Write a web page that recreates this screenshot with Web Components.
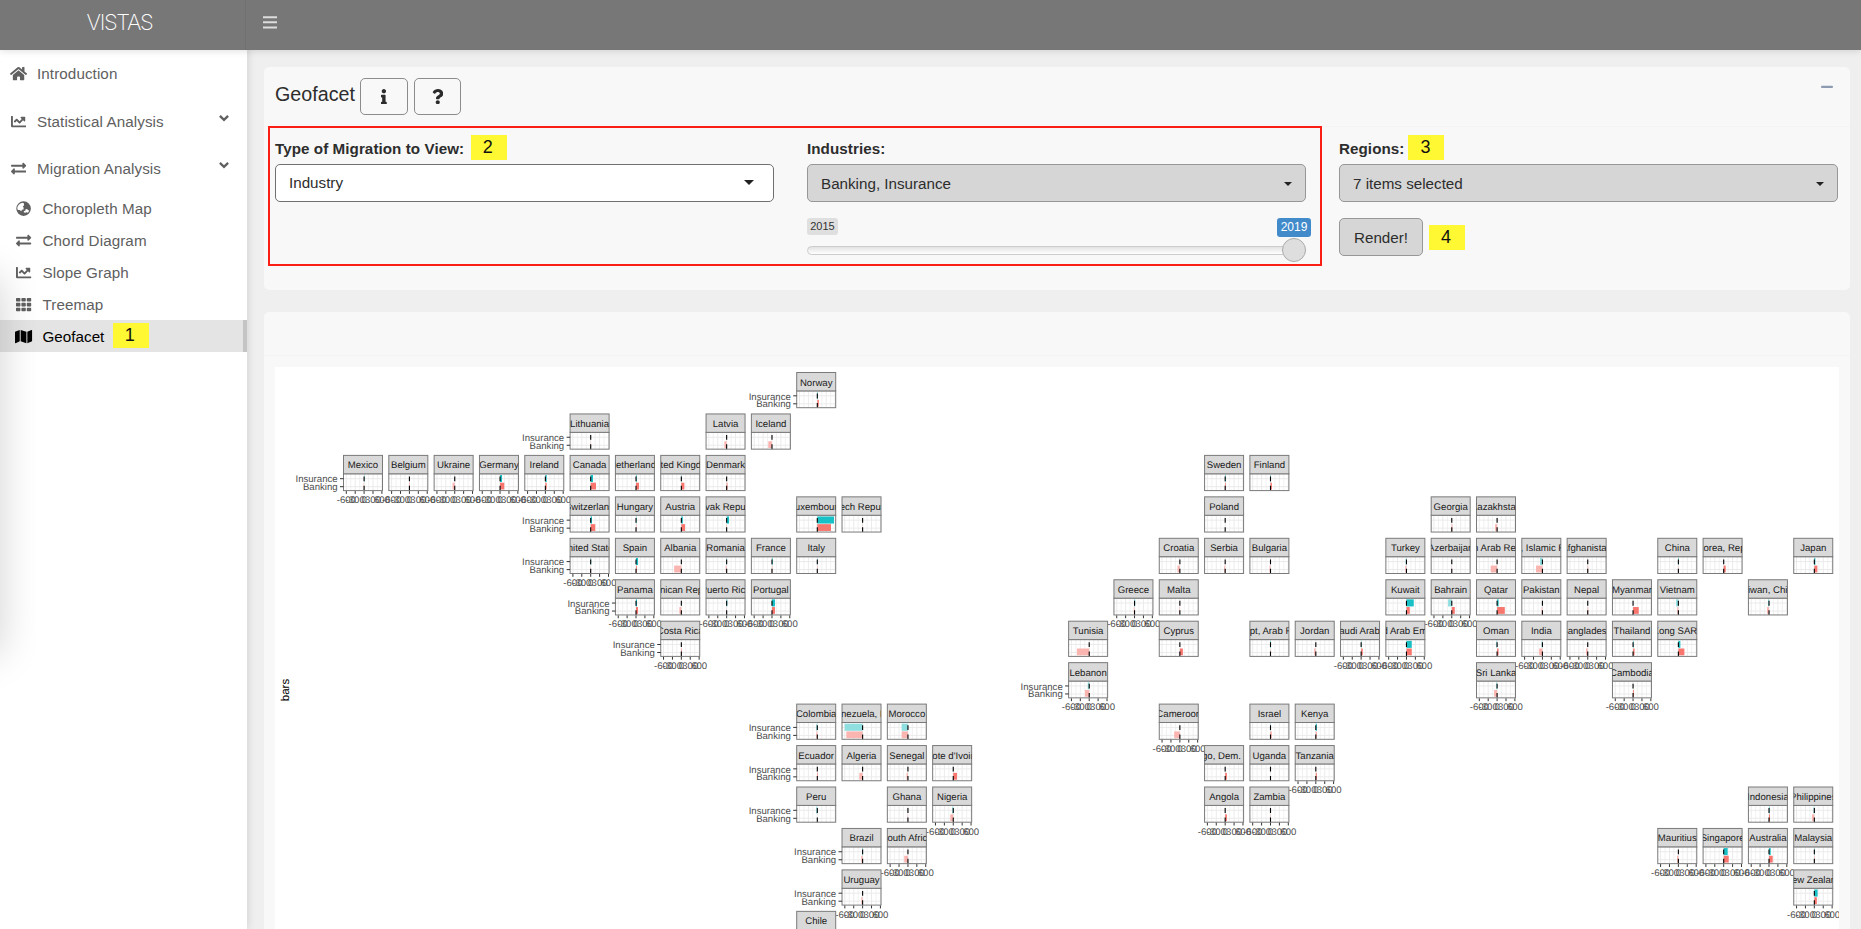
<!DOCTYPE html>
<html lang="en">
<head>
<meta charset="utf-8">
<title>VISTAS</title>
<style>
html,body{margin:0;height:100%;overflow:hidden}
body{font:15.2px/20px "Liberation Sans",Arial,sans-serif;color:#2d2d2d;background:#efefef}
</style>
</head>
<body>
<vistas-app></vistas-app>
<script>
const define = (name, html, setup) => customElements.define(name, class extends HTMLElement {
  connectedCallback() {
    if (this.shadowRoot) return;
    const root = this.attachShadow({ mode: 'open' });
    root.innerHTML = typeof html === 'function' ? html(this) : html;
    if (setup) setup(this, root);
  }
});

const ICONS = {
  home: ['0 0 576 512', '<path d="M280.37 148.26L96 300.11V464a16 16 0 0 0 16 16l112.06-.29a16 16 0 0 0 15.92-16V368a16 16 0 0 1 16-16h64a16 16 0 0 1 16 16v95.64a16 16 0 0 0 16 16.05L464 480a16 16 0 0 0 16-16V300L295.67 148.26a12.19 12.19 0 0 0-15.3 0zM571.6 251.47L488 182.56V44.05a12 12 0 0 0-12-12h-56a12 12 0 0 0-12 12v72.61L318.47 43a48 48 0 0 0-61 0L4.34 251.47a12 12 0 0 0-1.6 16.9l25.5 31A12 12 0 0 0 45.15 301l235.22-193.74a12.19 12.19 0 0 1 15.3 0L530.9 301a12 12 0 0 0 16.9-1.6l25.5-31a12 12 0 0 0-1.7-16.93z"/>'],
  chart: ['0 0 512 512', '<path d="M496 384H64V80c0-8.84-7.16-16-16-16H16C7.16 64 0 71.16 0 80v336c0 17.67 14.33 32 32 32h464c8.84 0 16-7.16 16-16v-32c0-8.84-7.16-16-16-16zM464 96H345.94c-21.38 0-32.09 25.85-16.97 40.97l32.4 32.4L288 242.75l-73.37-73.37c-12.5-12.5-32.76-12.5-45.25 0l-68.69 68.69c-6.25 6.25-6.25 16.38 0 22.63l22.62 22.62c6.25 6.25 16.38 6.25 22.63 0L192 237.25l73.37 73.37c12.5 12.5 32.76 12.5 45.25 0l96-96 32.4 32.4c15.12 15.12 40.97 4.41 40.97-16.97V112c.01-8.84-7.15-16-15.99-16z"/>'],
  exchange: ['0 0 512 512', '<path d="M0 168v-16c0-13.255 10.745-24 24-24h360V80c0-21.367 25.899-32.042 40.971-16.971l80 80c9.372 9.373 9.372 24.569 0 33.941l-80 80C409.956 271.982 384 261.456 384 240v-48H24c-13.255 0-24-10.745-24-24zm488 152H128v-48c0-21.314-25.862-32.08-40.971-16.971l-80 80c-9.372 9.373-9.372 24.569 0 33.941l80 80C102.057 463.997 128 453.437 128 432v-48h360c13.255 0 24-10.745 24-24v-16c0-13.255-10.745-24-24-24z"/>'],
  globe: ['0 0 16 16', '<path fill-rule="evenodd" d="M8 .3a7.7 7.7 0 1 0 0 15.4A7.7 7.7 0 0 0 8 .3zM6.600 1.900l1.700.6.2 1.900-1.300 1.500.9 1.300-.2 1.700-1.600.3-.8 1.500-1.600-1.300-2 .1-.6-2.200C1.700 5 3.600 2.600 6.600 1.900zM9.800 9l1.700-.5 1.200 1 1.200.9-1.300 2-1.500-.5-1.500.4-1.500-.5.3-1.200 1.500-.3z"/>'],
  grid: ['0 0 512 512', '<path d="M24 32h102q23 0 23 24v72q0 24-23 24H24Q0 152 0 128V56Q0 32 24 32zM206 32h100q24 0 24 24v72q0 24-24 24H206q-24 0-24-24V56q0-24 24-24zM387 32h101q24 0 24 24v72q0 24-24 24H387q-24 0-24-24V56q0-24 24-24zM24 192h102q23 0 23 24v80q0 24-23 24H24Q0 320 0 296v-80q0-24 24-24zM206 192h100q24 0 24 24v80q0 24-24 24H206q-24 0-24-24v-80q0-24 24-24zM387 192h101q24 0 24 24v80q0 24-24 24H387q-24 0-24-24v-80q0-24 24-24zM24 360h102q23 0 23 24v72q0 24-23 24H24Q0 480 0 456v-72q0-24 24-24zM206 360h100q24 0 24 24v72q0 24-24 24H206q-24 0-24-24v-72q0-24 24-24zM387 360h101q24 0 24 24v72q0 24-24 24H387q-24 0-24-24v-72q0-24 24-24z"/>'],
  map: ['0 0 576 512', '<path d="M0 117.66v346.32c0 11.32 11.43 19.06 21.94 14.86L160 416V32L20.12 87.95A32.006 32.006 0 0 0 0 117.66zM192 416l192 64V96L192 32v384zM554.06 33.16L416 96v384l139.88-55.95A31.996 31.996 0 0 0 576 394.34V48.02c0-11.32-11.43-19.06-21.94-14.86z"/>'],
  info: ['0 0 192 512', '<path d="M20 424.229h20V279.771H20c-11.046 0-20-8.954-20-20V212c0-11.046 8.954-20 20-20h112c11.046 0 20 8.954 20 20v212.229h20c11.046 0 20 8.954 20 20V492c0 11.046-8.954 20-20 20H20c-11.046 0-20-8.954-20-20v-47.771c0-11.046 8.954-20 20-20zM96 0C56.235 0 24 32.235 24 72s32.235 72 72 72 72-32.235 72-72S135.764 0 96 0z"/>'],
  question: ['0 0 384 512', '<path d="M202.021 0C122.202 0 70.503 32.703 29.914 91.026c-7.363 10.58-5.093 25.086 5.178 32.874l43.138 32.709c10.373 7.865 25.132 6.026 33.253-4.148 25.049-31.381 43.63-49.449 82.757-49.449 30.764 0 68.816 19.799 68.816 49.631 0 22.552-18.617 34.134-48.993 51.164-35.423 19.86-82.299 44.576-82.299 106.405V320c0 13.255 10.745 24 24 24h72.471c13.255 0 24-10.745 24-24v-5.773c0-42.86 125.268-44.645 125.268-160.627C377.504 66.256 286.902 0 202.021 0zM192 373.459c-38.196 0-69.271 31.075-69.271 69.271 0 38.195 31.075 69.27 69.271 69.27s69.271-31.075 69.271-69.271-31.075-69.27-69.271-69.27z"/>'],
  chevron: ['0 0 10 12', '<path d="M.9 3.900L5 7.900l4.100-4" fill="none" stroke="currentColor" stroke-width="2.300"/>'],
  bars: ['0 0 14 13', '<path d="M0 .2h14v2H0zM0 5.300h14v2H0zM0 10.400h14v2H0z"/>'],
  minus: ['0 0 12 4', '<rect y=".7" width="12" height="2.400" rx="1"/>']
};
define('ui-icon', el => {
  const [box, body] = ICONS[el.getAttribute('name')];
  return `<style>:host{display:inline-flex;flex:none}svg{height:var(--icon-h,15.2px);fill:currentColor;display:block}</style><svg viewBox="${box}">${body}</svg>`;
});

define('step-mark', `<style>:host{display:flex;flex:none;justify-content:center;box-sizing:border-box;width:36px;height:25px;background:#fff833;color:#111;font-weight:400;font-size:18px;line-height:24px;padding-right:2px;letter-spacing:0}</style><slot></slot>`);

define('app-header', `<style>
:host{display:flex;height:50px;flex:none;background:#777;color:#ddd;position:relative;z-index:2;box-shadow:0 1px 7px rgba(0,0,0,.13)}
.brand{width:246px;border-right:1px solid #707070;box-sizing:border-box;height:50px;text-align:center;font:200 22px/44px Inter,Roboto,sans-serif;letter-spacing:-1.3px;color:#fff;padding-right:6px}
.tool{display:flex;padding:16px 0 0 17px;--icon-h:13px}
</style><div class="brand"><slot></slot></div><div class="tool"><ui-icon name="bars"></ui-icon></div>`);

define('nav-item', el => `<style>
:host{display:flex;align-items:center;box-sizing:border-box;height:47px;color:#606060;padding-left:9px;letter-spacing:.09px}
:host([group]){height:47.500px;padding-top:1px}
:host([group][icon=chart]){padding-top:2px}
:host([sub]){height:32px;padding:1.500px 0 0 14.500px}
:host([active]){background:#e4e4e4;color:#000;border-right:4px solid #c4c4c4;letter-spacing:.03px}
.ic{width:19px;display:flex;justify-content:center;margin-right:9px}
:host([sub]) .ic{margin-right:9px}
.chev{margin:-8px 18px 0 auto;--icon-h:12px}
::slotted(step-mark){margin:-2px 0 0 8.500px}
</style><span class="ic"><ui-icon name="${el.getAttribute('icon')}"></ui-icon></span><slot></slot>${el.hasAttribute('group') ? '<ui-icon class="chev" name="chevron"></ui-icon>' : ''}`);

define('side-nav', `<style>
:host{display:block;width:247px;flex:none;background:#fff;padding-top:50px;margin-top:-50px;box-sizing:border-box;height:929px;position:relative;z-index:1;box-shadow:1px 0 8px rgba(0,0,0,.12)}
nav{display:flex;flex-direction:column}
.edge{position:absolute;left:0;top:200px;width:36px;height:540px;overflow:hidden;pointer-events:none}
.edge:before{content:"";position:absolute;left:-60px;top:82px;width:56px;height:368px;box-shadow:0 0 40px 4px rgba(0,0,0,.18)}
</style><nav><slot></slot></nav><div class="edge"></div>`);

define('dash-card', `<style>
:host{display:block;background:#f8f8f8;border-radius:5px;box-sizing:border-box}
.head{display:flex;align-items:flex-start;box-sizing:border-box;height:var(--head-h,60px);padding:0 17px 0 11px;border-bottom:1px solid #f4f4f4}
</style><div class="head"><slot name="head"></slot></div><slot></slot>`);

define('icon-button', el => `<style>
:host{display:flex;align-items:center;justify-content:center;box-sizing:border-box;height:37px;width:48px;border:1px solid #8c8c8c;border-radius:5px;--icon-h:15.400px;color:#2b2b2b}
</style><ui-icon name="${el.getAttribute('icon')}"></ui-icon>`);

define('field-label', `<style>:host{display:flex;font-weight:700;height:29px;line-height:27px;align-items:flex-start;letter-spacing:.06px}::slotted(step-mark){margin-left:var(--gap,6.500px)}</style><slot></slot>`);

define('select-box', `<style>
:host{display:flex;align-items:center;justify-content:space-between;box-sizing:border-box;height:38px;border:1px solid #979797;border-radius:5px;background:#d6d6d6;padding:1px 13px 0 13px}
:host([plain]){background:#fff;border-color:#707070;padding:0 19px 1px 13px}
i{width:0;height:0;border:4.700px solid transparent;border-top-color:#222;border-bottom:0}
:host([plain]) i{border-width:5px 5.300px 0}
</style><slot></slot><i></i>`);

define('push-button', `<style>:host{display:flex;align-items:center;justify-content:center;box-sizing:border-box;width:84px;height:38px;padding-top:2px;border:1px solid #979797;border-radius:5px;background:#d6d6d6}</style><slot></slot>`);

define('year-slider', el => `<style>
:host{display:block;margin-top:16px}
.tags{display:flex;justify-content:space-between;align-items:flex-start;margin-right:-5px;height:19px}
.min{font-size:11px;line-height:17px;height:17px;width:31px;text-align:center;background:#dfdfdf;border-radius:3px;color:#333}
.val{font-size:12px;line-height:18px;height:19px;width:34px;text-align:center;background:#428bca;border-radius:3px;color:#fff}
.track{display:flex;align-items:center;justify-content:flex-end;height:9px;margin-top:9px;box-sizing:border-box;border:1px solid #ccc;border-radius:5px;background:linear-gradient(#e2e2e2,#fff)}
.knob{width:24px;height:24px;margin:-2px -1px 0 0;box-sizing:border-box;flex:none;border:1px solid #ababab;border-radius:50%;background:#dedede}
</style><div class="tags"><span class="min">${el.getAttribute('min')}</span><span class="val">${el.getAttribute('value')}</span></div><div class="track"><div class="knob"></div></div>`);

/* name, column, row, insurance bar, banking bar, axes shown (x and/or y) */
const COUNTRIES = [
['Norway',10,0,.5,1.500,'y'],
['Lithuania',5,1,0,-.3,'y'],['Latvia',8,1,0,-2.300],['Iceland',9,1,0,-3.700],
['Mexico',0,2,.3,-.4,'xy'],['Belgium',1,2,0,.4,'x'],['Ukraine',2,2,0,-2.200,'x'],['Germany',3,2,2,4.200,'x'],['Ireland',4,2,1.300,1.300,'x'],['Canada',5,2,2.300,5.300],['Netherlands',6,2,.6,3],['United Kingdom',7,2,.3,3],['Denmark',8,2,0,.8],['Sweden',19,2,.5,.7],['Finland',20,2,.4,1.400],
['Switzerland',5,3,1.300,4.500,'y'],['Hungary',6,3,.4,.3],['Austria',7,3,1.500,3.700],['Slovak Republic',8,3,2.400,-.5],['Luxembourg',10,3,16.700,13.700],['Czech Republic',11,3,0,-.3],['Poland',19,3,0,0],['Georgia',24,3,0,.5],['Kazakhstan',25,3,0,-2],
['United States',5,4,.4,-.4,'xy'],['Spain',6,4,2,.8],['Albania',7,4,0,-7.200],['Romania',8,4,-.6,-1],['France',9,4,.6,.3],['Italy',10,4,.2,.3],['Croatia',18,4,0,-2.400],['Serbia',19,4,0,-1],['Bulgaria',20,4,0,-1],['Turkey',23,4,-.8,-1.200],['Azerbaijan',24,4,0,-.4],['Syrian Arab Republic',25,4,0,-6.400],['Iran, Islamic Rep.',26,4,-2.400,-6.400],['Afghanistan',27,4,0,.4],['China',29,4,.5,-.5],['Korea, Rep.',30,4,0,2],['Japan',32,4,1,3],
['Panama',6,5,1,2,'xy'],['Dominican Republic',7,5,0,-2],['Puerto Rico',8,5,.6,-.3,'x'],['Portugal',9,5,3,3,'x'],['Greece',17,5,.6,-.8,'x'],['Malta',18,5,0,-.5],['Kuwait',23,5,7.300,3.300],['Bahrain',24,5,-3.700,3,'x'],['Qatar',25,5,1.500,7.700],['Pakistan',26,5,-.3,-.8],['Nepal',27,5,0,.4],['Myanmar',28,5,0,5.700],['Vietnam',29,5,-2.300,-1.200],['Taiwan, China',31,5,-1,-2],
['Costa Rica',7,6,0,.5,'xy'],['Tunisia',16,6,0,-12.300],['Cyprus',18,6,0,3],['Egypt, Arab Rep.',20,6,.5,-.4],['Jordan',21,6,0,-1.700],['Saudi Arabia',22,6,.3,1.600,'x'],['United Arab Emirates',23,6,5.300,5.300,'x'],['Oman',25,6,-.8,1.500],['India',26,6,-.8,-3.300,'x'],['Bangladesh',27,6,0,-1.700,'x'],['Thailand',28,6,.5,1.500],['Hong Kong SAR, China',29,6,2,6],
['Lebanon',16,7,-1.500,-4.300,'xy'],['Sri Lanka',25,7,-.8,-3,'x'],['Cambodia',28,7,0,.8,'x'],
['Colombia',10,8,-1,-1,'y'],['Venezuela, RB',11,8,-18,-16.300],['Morocco',12,8,-6.300,-6.300],['Cameroon',18,8,0,-5.700,'x'],['Israel',20,8,.3,1],['Kenya',21,8,1,.7],
['Ecuador',10,9,0,.6,'y'],['Algeria',11,9,0,-3.300],['Senegal',12,9,0,-1.400],["Cote d'Ivoire",13,9,0,3.700],['Congo, Dem. Rep.',19,9,0,1.700],['Uganda',20,9,0,0],['Tanzania',21,9,0,1,'x'],
['Peru',10,10,-1,0,'y'],['Ghana',12,10,0,-.4],['Nigeria',13,10,-1,-3,'x'],['Angola',19,10,0,1.700,'x'],['Zambia',20,10,0,-.5,'x'],['Indonesia',31,10,.5,1],['Philippines',32,10,-.8,-2.300],
['Brazil',11,11,.4,-1.400,'y'],['South Africa',12,11,0,-3.700,'x'],['Mauritius',29,11,0,-1.400,'x'],['Singapore',30,11,4,5,'x'],['Australia',31,11,1.700,3.700,'x'],['Malaysia',32,11,.3,.3],
['Uruguay',11,12,0,-1.300,'xy'],['New Zealand',32,12,3.300,2.500,'x'],
['Chile',10,13,0,0]];

const W = 39, STRIP = 18.400, H = 35.200, ZERO = 20.600, STEP = 8.900;
function facet([name, col, row, ins, bank, axes = '']) {
  const x = (68.500 + col * 45.320).toFixed(2), y = (5.500 + row * 41.450).toFixed(2);
  const bar = (v, top, h, full, pale) => v ? `<rect x="${v < 0 ? ZERO + v : ZERO}" y="${top}" width="${Math.abs(v)}" height="${h}" fill="${v < 0 ? pale : full}"/>` : '';
  let s = `<g transform="translate(${x} ${y})"><rect width="${W}" height="${H}" fill="#fff"/>`;
  for (let k = -4; k <= 4; k++) {
    const gx = ZERO + k * STEP / 2;
    if (gx > 0 && gx < W) s += `<path d="M${gx} ${STRIP}V${H}" stroke="#ebebeb" stroke-width="${k % 2 ? .7 : 1}"/>`;
  }
  s += `<path d="M0 23.300H${W}M0 31.300H${W}" stroke="#ebebeb"/>`;
  s += bar(ins, 19.600, 7.100, '#19c1c7', '#8fdfe1') + bar(bank, 27.300, 6.800, '#f8766d', '#fbb5b1');
  s += `<path d="M${ZERO} ${H}V${STRIP}" stroke="#000" stroke-width="1.100" stroke-dasharray="4.800 4.500"/>`;
  s += `<rect y="${STRIP}" width="${W}" height="${H - STRIP}" fill="none" stroke="#7a7a7a"/>`;
  s += `<rect width="${W}" height="${STRIP}" fill="#d9d9d9" stroke="#7a7a7a"/>`;
  s += `<text class="strip" clip-path="url(#strip)" x="19.500" y="13">${name}</text>`;
  if (axes.includes('y')) s += `<path d="M-3.500 23.300H0M-3.500 31.300H0" stroke="#333"/><text class="yt" x="-5.900" y="27">Insurance</text><text class="yt" x="-5.900" y="34.700">Banking</text>`;
  if (axes.includes('x')) [-600, -300, 0, 300, 600].forEach((v, i) => {
    const tx = (2.800 + i * STEP).toFixed(1);
    s += `<path d="M${tx} ${H + .5}v2.800" stroke="#333"/><text class="xt" x="${tx}" y="47.700">${v}</text>`;
  });
  return s + '</g>';
}
define('geo-facet', `<style>
:host{display:block;margin:11px 11px 0 11px;height:562px;background:#fff;overflow:hidden}
svg{display:block;font-family:"Liberation Sans",Arial,sans-serif;text-rendering:geometricPrecision}
.strip{font-size:9.600px;text-anchor:middle;fill:#1a1a1a}
.yt{font-size:9.600px;text-anchor:end;fill:#4d4d4d}
.xt{font-size:9.600px;text-anchor:middle;fill:#4d4d4d}
.title{font-size:11.500px;text-anchor:middle;fill:#000}
</style><svg width="1564" height="562"><defs><clipPath id="strip"><rect width="39" height="18"/></clipPath></defs>
<text class="title" transform="translate(14.300 323) rotate(-90)">bars</text>${COUNTRIES.map(facet).join('')}</svg>`);

define('vistas-app', `<style>
:host{display:flex;flex-direction:column;height:929px;overflow:hidden}
.body{display:flex;flex:1;min-height:0}
main{flex:1;min-width:0;display:flex;flex-direction:column;gap:22px;padding:17px 11px 0 17px}
.controls{height:223px;flex:none;--head-h:60px;position:relative}
h3{font-size:19.700px;line-height:24px;font-weight:400;margin:15px 5px 0 0}
icon-button{margin-top:11px}
icon-button+icon-button{margin-left:6px;width:47px}
.fold{margin:18px 0 0 auto;--icon-h:4px;color:#8e9bb0}
.cols{display:grid;grid-template-columns:499px 499px 499px;gap:33px;padding:8px 11px 0}
.go{display:flex;align-items:center;gap:6px;margin-top:16px}
.go step-mark{margin-top:1px}
.outline{position:absolute;left:4px;top:59px;width:1054px;height:140px;box-sizing:border-box;border:2px solid #fa1e14}
.plot{flex:none;height:640px;--head-h:44px}
.r{--gap:4px}
</style>
<app-header>VISTAS</app-header>
<div class="body">
<side-nav>
<nav-item icon="home">Introduction</nav-item>
<nav-item icon="chart" group>Statistical Analysis</nav-item>
<nav-item icon="exchange" group>Migration Analysis</nav-item>
<nav-item icon="globe" sub>Choropleth Map</nav-item>
<nav-item icon="exchange" sub>Chord Diagram</nav-item>
<nav-item icon="chart" sub>Slope Graph</nav-item>
<nav-item icon="grid" sub>Treemap</nav-item>
<nav-item icon="map" sub active>Geofacet<step-mark>1</step-mark></nav-item>
</side-nav>
<main>
<dash-card class="controls">
<h3 slot="head">Geofacet</h3><icon-button slot="head" icon="info"></icon-button><icon-button slot="head" icon="question"></icon-button><ui-icon slot="head" class="fold" name="minus"></ui-icon>
<div class="cols">
<div><field-label>Type of Migration to View:<step-mark>2</step-mark></field-label><select-box plain>Industry</select-box></div>
<div><field-label>Industries:</field-label><select-box>Banking, Insurance</select-box><year-slider min="2015" value="2019"></year-slider></div>
<div><field-label class="r">Regions:<step-mark>3</step-mark></field-label><select-box>7 items selected</select-box><div class="go"><push-button>Render!</push-button><step-mark>4</step-mark></div></div>
</div>
<div class="outline"></div>
</dash-card>
<dash-card class="plot"><geo-facet></geo-facet></dash-card>
</main>
</div>`);
</script>
</body>
</html>
